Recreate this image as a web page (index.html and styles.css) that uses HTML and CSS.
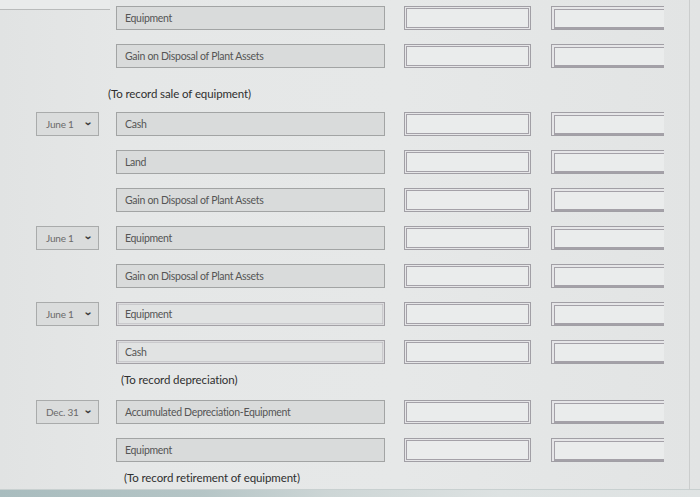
FILE: index.html
```html
<!DOCTYPE html>
<html>
<head>
<meta charset="utf-8">
<link rel="stylesheet" href="styles.css">
</head>
<body>
<div class="page">
  <div class="sheet">
    <div class="entry">
      <div class="date empty"></div>
      <div class="account">Equipment</div>
      <div class="amt"></div>
      <div class="amt credit"></div>
    </div>
    <div class="entry">
      <div class="date empty"></div>
      <div class="account">Gain on Disposal of Plant Assets</div>
      <div class="amt"></div>
      <div class="amt credit"></div>
    </div>
    <div class="memo memo-sale">(To record sale of equipment)</div>

    <div class="entry">
      <div class="date"><span>June 1</span><span class="chev">&#8964;</span></div>
      <div class="account">Cash</div>
      <div class="amt"></div>
      <div class="amt credit"></div>
    </div>
    <div class="entry">
      <div class="date empty"></div>
      <div class="account">Land</div>
      <div class="amt"></div>
      <div class="amt credit"></div>
    </div>
    <div class="entry">
      <div class="date empty"></div>
      <div class="account">Gain on Disposal of Plant Assets</div>
      <div class="amt"></div>
      <div class="amt credit"></div>
    </div>
    <div class="entry">
      <div class="date"><span>June 1</span><span class="chev">&#8964;</span></div>
      <div class="account">Equipment</div>
      <div class="amt"></div>
      <div class="amt credit"></div>
    </div>
    <div class="entry">
      <div class="date empty"></div>
      <div class="account">Gain on Disposal of Plant Assets</div>
      <div class="amt"></div>
      <div class="amt credit"></div>
    </div>
    <div class="entry">
      <div class="date"><span>June 1</span><span class="chev">&#8964;</span></div>
      <div class="account light">Equipment</div>
      <div class="amt"></div>
      <div class="amt credit"></div>
    </div>
    <div class="entry">
      <div class="date empty"></div>
      <div class="account light">Cash</div>
      <div class="amt"></div>
      <div class="amt credit"></div>
    </div>
    <div class="memo memo-dep">(To record depreciation)</div>

    <div class="entry">
      <div class="date"><span>Dec. 31</span><span class="chev">&#8964;</span></div>
      <div class="account">Accumulated Depreciation-Equipment</div>
      <div class="amt"></div>
      <div class="amt credit"></div>
    </div>
    <div class="entry">
      <div class="date empty"></div>
      <div class="account">Equipment</div>
      <div class="amt"></div>
      <div class="amt credit"></div>
    </div>
    <div class="memo memo-ret">(To record retirement of equipment)</div>
  </div>
  <div class="bottom-strip"></div>
</div>
</body>
</html>
```

FILE: styles.css
```css
* { box-sizing: border-box; }
html, body {
  margin: 0;
  padding: 0;
  width: 700px;
  height: 497px;
  overflow: hidden;
  background: #e3e5e5;
  font-family: Lato, "Open Sans", sans-serif;
}
.page {
  position: relative;
  width: 700px;
  height: 497px;
  background: linear-gradient(90deg, #e1e3e3 0px, #e5e7e7 120px, #e6e8e8 400px, #e2e4e4 700px);
}
.page::before {
  content: "";
  position: absolute;
  left: 0;
  top: 0;
  width: 110px;
  height: 9px;
  background: #e9ebeb;
  border-bottom: 1px solid #b9bbbb;
}
.page::after {
  content: "";
  position: absolute;
  left: 689px;
  top: 0;
  width: 1px;
  height: 490px;
  background: #cbcdcd;
}
.sheet {
  position: relative;
  padding: 6px 0 0 36px;
  display: flex;
  flex-direction: column;
  gap: 14px;
}
.entry {
  display: grid;
  grid-template-columns: 63px 269px 129px 116px;
  column-gap: 17px;
  height: 24px;
}
.entry > .amt { margin-left: 2px; }
.entry > .credit { margin-left: 3px; }
.date {
  display: flex;
  align-items: center;
  justify-content: space-between;
  padding: 0 6px 0 9px;
  background: #dadcdc;
  border: 1.5px solid #a9abab;
  font-size: 10px;
  color: #6a6a6a;
  letter-spacing: -0.2px;
}
.date.empty {
  visibility: hidden;
}
.chev {
  font-size: 10px;
  color: #3a3a3a;
  line-height: 1;
  transform: translateY(-3px) scaleX(1.2);
  font-weight: bold;
}
.account {
  display: flex;
  align-items: center;
  padding-left: 8px;
  background: #d9dbdb;
  border: 1.5px solid #a2a4a4;
  font-size: 10.5px;
  color: #555;
  letter-spacing: -0.3px;
}
.account.light {
  background: #e1e3e3;
  border: 1.5px solid #a3a1a6;
  box-shadow: inset 0 0 0 1px #dcdcde, inset 0 0 0 1.5px #b4b2b7;
}
.amt {
  background: #eaecec;
  border: 1px solid #a19fa5;
  box-shadow: inset 0 0 0 1px #e6e6e8, inset 0 0 0 2px #a4a1a8;
}
.amt.credit {
  border-right: none;
  box-shadow: inset 1px 1px 0 1px #e6e6e8, inset 2px 2px 0 1px #a4a1a8, inset 0 -2px 0 0 #a4a1a8;
}
.memo {
  height: 17px;
  line-height: 17px;
  font-size: 11.5px;
  color: #2f2f2f;
  letter-spacing: -0.1px;
}
.memo-sale { margin-top: 3px; margin-bottom: -4px; padding-left: 72px; }
.memo-dep { margin-top: -7px; margin-bottom: -2px; padding-left: 85px; }
.memo-ret { margin-top: -7px; padding-left: 88px; }
.bottom-strip {
  position: absolute;
  left: 0;
  bottom: 0;
  width: 700px;
  height: 8px;
  background: linear-gradient(90deg, #a8bcbe 0px, #b5c5c6 200px, #cdd6d6 330px, #dde2e2 500px, #e0e4e4 700px);
  border-top: 1px solid #c8d0d0;
}
```
